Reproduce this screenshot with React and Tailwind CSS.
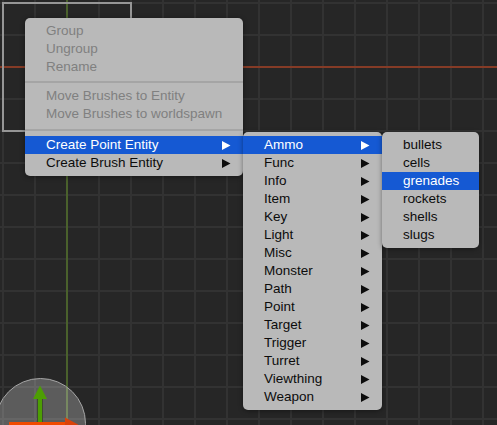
const entityTypes = ['Ammo', 'Func', 'Info', 'Item', 'Key', 'Light', 'Misc', 'Monster', 'Path', 'Point', 'Target', 'Trigger', 'Turret', 'Viewthing', 'Weapon']
const ammoTypes = ['bullets', 'cells', 'grenades', 'rockets', 'shells', 'slugs']

function Arrow() {
  return (
    <svg width="9" height="9" viewBox="0 0 9 9">
      <path d="M0 0 L8.5 4.5 L0 9 Z" fill="currentColor" />
    </svg>
  )
}

function Item({ label, active, disabled, arrow }) {
  const color = active ? 'bg-[#1559d3] text-white' : disabled ? 'text-[#808080]' : 'text-[#0c0c0c]'
  return (
    <div className={`flex h-[18px] items-center justify-between pl-[21px] pr-[12px] ${color}`}>
      <span>{label}</span>
      {arrow && <Arrow />}
    </div>
  )
}

function Menu({ className, children }) {
  return (
    <div className={`rounded-[5px] bg-[#b9b9b9] py-[4px] text-[13.5px] leading-[18px] shadow-[0_1px_5px_rgba(0,0,0,0.4)] ${className}`}>
      {children}
    </div>
  )
}

export default function App() {
  return (
    <div className="relative h-[425px] w-[497px] overflow-hidden bg-[#262626] bg-[linear-gradient(to_right,#323232_2px,transparent_2px),linear-gradient(to_bottom,#323232_2px,transparent_2px)] bg-[size:32px_32px] bg-[position:2px_2px] font-['Liberation_Sans',Arial,sans-serif]">
      {/* world axes */}
      <div className="absolute left-[66px] top-0 h-full w-[2px] bg-[#4a612c]" />
      <div className="absolute left-0 top-[66px] h-[2px] w-full bg-[#853b26]" />
      {/* selected brush */}
      <div className="absolute left-[2px] top-[2px] h-[130px] w-[130px] border-2 border-[#969696]" />

      {/* gizmo */}
      <div className="absolute left-[-5px] top-[378px] h-[92px] w-[91px] rounded-full border border-[#a5a5a5] bg-white/25" />
      <svg width="90" height="50" viewBox="0 0 90 50" className="absolute left-0 top-[375px]">
        <rect x="37" y="22" width="6" height="28" fill="#3f4a33" />
        <rect x="38" y="22" width="4" height="28" fill="#4d9e03" />
        <path d="M33 24 L40 10.5 L47 24 Z" fill="#4d9e03" />
        <rect x="9" y="47" width="57" height="3" fill="#f04a00" />
        <path d="M65 42.5 L78 49.5 L78 50 L65 50 Z" fill="#d9420a" />
      </svg>

      <div className="absolute left-[25px] top-[18px] flex items-start">
        <Menu className="relative w-[218px]">
          <Item label="Group" disabled />
          <Item label="Ungroup" disabled />
          <Item label="Rename" disabled />
          <div className="mb-[4px] mt-[5px] h-[2px] bg-[#a5a5a5]" />
          <Item label="Move Brushes to Entity" disabled />
          <Item label="Move Brushes to worldspawn" disabled />
          <div className="mb-[5px] mt-[6px] h-[2px] bg-[#a5a5a5]" />
          <Item label="Create Point Entity" active arrow />
          <Item label="Create Brush Entity" arrow />
        </Menu>
        <Menu className="relative mt-[114px] w-[139px]">
          {entityTypes.map((t, i) => <Item key={t} label={t} active={i === 0} arrow />)}
        </Menu>
        <Menu className="relative mt-[114px] w-[97px]">
          {ammoTypes.map((t, i) => <Item key={t} label={t} active={i === 2} />)}
        </Menu>
      </div>
    </div>
  )
}
